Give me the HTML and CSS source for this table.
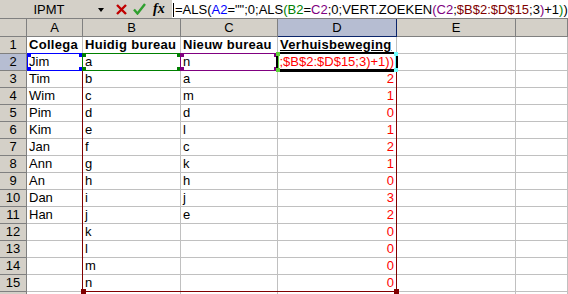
FILE: index.html
```html
<!DOCTYPE html>
<html lang="nl">
<head>
<meta charset="utf-8">
<title>Excel - Verhuisbeweging</title>
<link rel="stylesheet" href="styles.css">
</head>
<body>
<div class="app">
  <div class="formula-bar">
    <div class="name-box">IPMT</div>
    <div class="nb-arrow"></div>
    <svg class="ico-x" width="11" height="11" viewBox="0 0 11 11"><path d="M1 1 L10 10 M10 1 L1 10" stroke="#c00000" stroke-width="2.4" fill="none"/></svg>
    <svg class="ico-ok" width="13" height="12" viewBox="0 0 13 12"><path d="M1 6.5 L4.5 10.5 L12 1" stroke="#2f9f2f" stroke-width="2.4" fill="none"/></svg>
    <span class="fx">fx</span>
    <div class="formula-input"><span class="caret"></span>=ALS(<span class="r-blue">A2</span>="";0;ALS<span class="r-green">(B2</span>=<span class="r-purple">C2</span>;0;VERT.ZOEKEN<span class="r-purple">(C2</span>;<span class="r-dred">$B$2:$D$15</span>;3<span class="r-purple">)</span>+1<span class="r-green">)</span>)</div>
  </div>

  <div class="sheet">
    <div class="hd corner"></div>
    <div class="hd">A</div>
    <div class="hd">B</div>
    <div class="hd">C</div>
    <div class="hd sel-col">D</div>
    <div class="hd">E</div>
    <div class="hd"></div>

    <div class="rh">1</div>
    <div class="cell b">Collega</div>
    <div class="cell b">Huidig bureau</div>
    <div class="cell b">Nieuw bureau</div>
    <div class="cell b u">Verhuisbeweging</div>
    <div class="cell"></div>
    <div class="cell"></div>

    <div class="rh sel-row">2</div>
    <div class="cell">Jim</div>
    <div class="cell">a</div>
    <div class="cell">n</div>
    <div class="cell num edit"><span>=ALS(A2="";0;ALS(B2=C2;0;VERT.ZOEKEN(C2;$B$2:$D$15;3)+1))</span></div>
    <div class="cell"></div>
    <div class="cell"></div>

    <div class="rh">3</div>
    <div class="cell">Tim</div>
    <div class="cell">b</div>
    <div class="cell">a</div>
    <div class="cell num">2</div>
    <div class="cell"></div>
    <div class="cell"></div>

    <div class="rh">4</div>
    <div class="cell">Wim</div>
    <div class="cell">c</div>
    <div class="cell">m</div>
    <div class="cell num">1</div>
    <div class="cell"></div>
    <div class="cell"></div>

    <div class="rh">5</div>
    <div class="cell">Pim</div>
    <div class="cell">d</div>
    <div class="cell">d</div>
    <div class="cell num">0</div>
    <div class="cell"></div>
    <div class="cell"></div>

    <div class="rh">6</div>
    <div class="cell">Kim</div>
    <div class="cell">e</div>
    <div class="cell">l</div>
    <div class="cell num">1</div>
    <div class="cell"></div>
    <div class="cell"></div>

    <div class="rh">7</div>
    <div class="cell">Jan</div>
    <div class="cell">f</div>
    <div class="cell">c</div>
    <div class="cell num">2</div>
    <div class="cell"></div>
    <div class="cell"></div>

    <div class="rh">8</div>
    <div class="cell">Ann</div>
    <div class="cell">g</div>
    <div class="cell">k</div>
    <div class="cell num">1</div>
    <div class="cell"></div>
    <div class="cell"></div>

    <div class="rh">9</div>
    <div class="cell">An</div>
    <div class="cell">h</div>
    <div class="cell">h</div>
    <div class="cell num">0</div>
    <div class="cell"></div>
    <div class="cell"></div>

    <div class="rh">10</div>
    <div class="cell">Dan</div>
    <div class="cell">i</div>
    <div class="cell">j</div>
    <div class="cell num">3</div>
    <div class="cell"></div>
    <div class="cell"></div>

    <div class="rh">11</div>
    <div class="cell">Han</div>
    <div class="cell">j</div>
    <div class="cell">e</div>
    <div class="cell num">2</div>
    <div class="cell"></div>
    <div class="cell"></div>

    <div class="rh">12</div>
    <div class="cell"></div>
    <div class="cell">k</div>
    <div class="cell"></div>
    <div class="cell num">0</div>
    <div class="cell"></div>
    <div class="cell"></div>

    <div class="rh">13</div>
    <div class="cell"></div>
    <div class="cell">l</div>
    <div class="cell"></div>
    <div class="cell num">0</div>
    <div class="cell"></div>
    <div class="cell"></div>

    <div class="rh">14</div>
    <div class="cell"></div>
    <div class="cell">m</div>
    <div class="cell"></div>
    <div class="cell num">0</div>
    <div class="cell"></div>
    <div class="cell"></div>

    <div class="rh">15</div>
    <div class="cell"></div>
    <div class="cell">n</div>
    <div class="cell"></div>
    <div class="cell num">0</div>
    <div class="cell"></div>
    <div class="cell"></div>

    <div class="rh"></div>
    <div class="cell"></div>
    <div class="cell"></div>
    <div class="cell"></div>
    <div class="cell"></div>
    <div class="cell"></div>
    <div class="cell"></div>

    <!-- reference outlines drawn over the grid -->
    <div class="ref ref-range">
      <i class="h h-bl"></i><i class="h h-br"></i>
    </div>
    <div class="ref ref-a2">
      <i class="h h-tl"></i><i class="h h-tr"></i><i class="h h-bl"></i><i class="h h-br"></i>
    </div>
    <div class="ref ref-b2">
      <i class="h h-tl"></i><i class="h h-tr"></i><i class="h h-bl"></i><i class="h h-br"></i>
    </div>
    <div class="ref ref-c2">
      <i class="h h-tl"></i><i class="h h-tr"></i><i class="h h-bl"></i><i class="h h-br"></i>
    </div>
    <div class="active">
      <i class="ah ah-tl"></i><i class="ah ah-tr"></i><i class="ah ah-bl"></i><i class="ah ah-br"></i>
    </div>
  </div>
</div>
</body>
</html>
```

FILE: styles.css
```css
* { box-sizing: border-box; }
html, body { margin: 0; padding: 0; }
body {
  width: 568px;
  height: 294px;
  overflow: hidden;
  background: #fff;
  font-family: "Liberation Sans", Arial, sans-serif;
  font-size: 13px;
  color: #000;
}

/* ---------- formula bar ---------- */
.formula-bar {
  display: flex;
  align-items: flex-start;
  height: 19px;
  background: #d4d0c8;
  border-bottom: 1px solid #808080;
}
.name-box {
  width: 98px;
  text-align: center;
  line-height: 17px;
  padding-top: 1px;
}
.nb-arrow {
  width: 0;
  height: 0;
  margin-top: 8px;
  border-left: 3.5px solid transparent;
  border-right: 3.5px solid transparent;
  border-top: 4px solid #000;
}
.ico-x { margin: 4px 0 0 12px; }
.ico-ok { margin: 3px 0 0 6px; }
.fx {
  margin-left: 7px;
  font-family: "Liberation Serif", "Times New Roman", serif;
  font-style: italic;
  font-weight: bold;
  font-size: 14px;
  line-height: 17px;
}
.formula-input {
  margin-left: auto;
  width: 396px;
  height: 18px;
  background: #fff;
  line-height: 17px;
  padding: 1px 0 0 1px;
  white-space: nowrap;
  overflow: hidden;
  display: flex;
}
.caret {
  width: 1px;
  height: 14px;
  margin: 2px 1px 0 0;
  background: #000;
}
.r-blue { color: #0000ff; }
.r-green { color: #008000; }
.r-purple { color: #800080; }
.r-dred { color: #800000; }

/* ---------- sheet grid ---------- */
.sheet {
  position: relative;
  display: grid;
  grid-template-columns: 27px 56px 98px 97px 119px 119px 52px;
  grid-template-rows: 18px repeat(15, 17px) 3px;
}
.cell {
  border-right: 1px solid #c0c0c0;
  border-bottom: 1px solid #c0c0c0;
  padding: 0 2px;
  line-height: 16px;
  white-space: nowrap;
  overflow: hidden;
}
.hd, .rh {
  background: #d4d0c8;
  border-right: 1px solid #808080;
  border-bottom: 1px solid #808080;
  text-align: center;
  white-space: nowrap;
  overflow: hidden;
}
.hd { line-height: 17px; }
.rh { line-height: 16px; }
.sel-col { background: #b6bdd2; border-color: #0a246a; }
.sel-row { background: #b6bdd2; }

.b { font-weight: bold; letter-spacing: 0.3px; }
.u { text-decoration: underline; }
.num { color: #ff0000; text-align: right; }
.edit {
  display: flex;
  justify-content: flex-end;
}
.edit span { white-space: nowrap; }

/* ---------- reference outlines ---------- */
.ref {
  position: absolute;
  border: 1px solid;
  pointer-events: none;
}
.ref .h {
  position: absolute;
  width: 4px;
  height: 4px;
  background: currentColor;
}
.h-tl { left: -1px; top: -1px; }
.h-tr { right: -1px; top: -1px; }
.h-bl { left: -1px; bottom: -1px; }
.h-br { right: -1px; bottom: -1px; }

.ref-range { left: 82px; top: 34px; width: 315px; height: 239px; color: #800000; border-color: #800000; }
.ref-range .h { width: 5px; height: 5px; }
.ref-range .h-bl { left: -2px; bottom: -3px; }
.ref-range .h-br { right: -3px; bottom: -3px; }
.ref-a2 { left: 27px; top: 34px; width: 56px; height: 18px; color: #0000ff; border-color: #0000ff; }
.ref-b2 { left: 82px; top: 34px; width: 99px; height: 18px; color: #008000; border-color: #008000; }
.ref-c2 { left: 180px; top: 34px; width: 98px; height: 18px; color: #800080; border-color: #800080; }

.active {
  position: absolute;
  left: 276px;
  top: 33px;
  width: 122px;
  height: 20px;
  border: 2px solid #000;
  border-bottom-width: 3px;
  box-shadow: inset 1px 0 0 #5ed13a, inset -1px 0 0 #6fffff;
}
.ah {
  position: absolute;
  width: 4px;
  height: 4px;
}
.ah-tl { left: -2px; top: -2px; background: #5ed13a; }
.ah-bl { left: -2px; bottom: -3px; background: #5ed13a; }
.ah-tr { right: -2px; top: -2px; background: #6fffff; }
.ah-br { right: -2px; bottom: -3px; background: #6fffff; }
```
